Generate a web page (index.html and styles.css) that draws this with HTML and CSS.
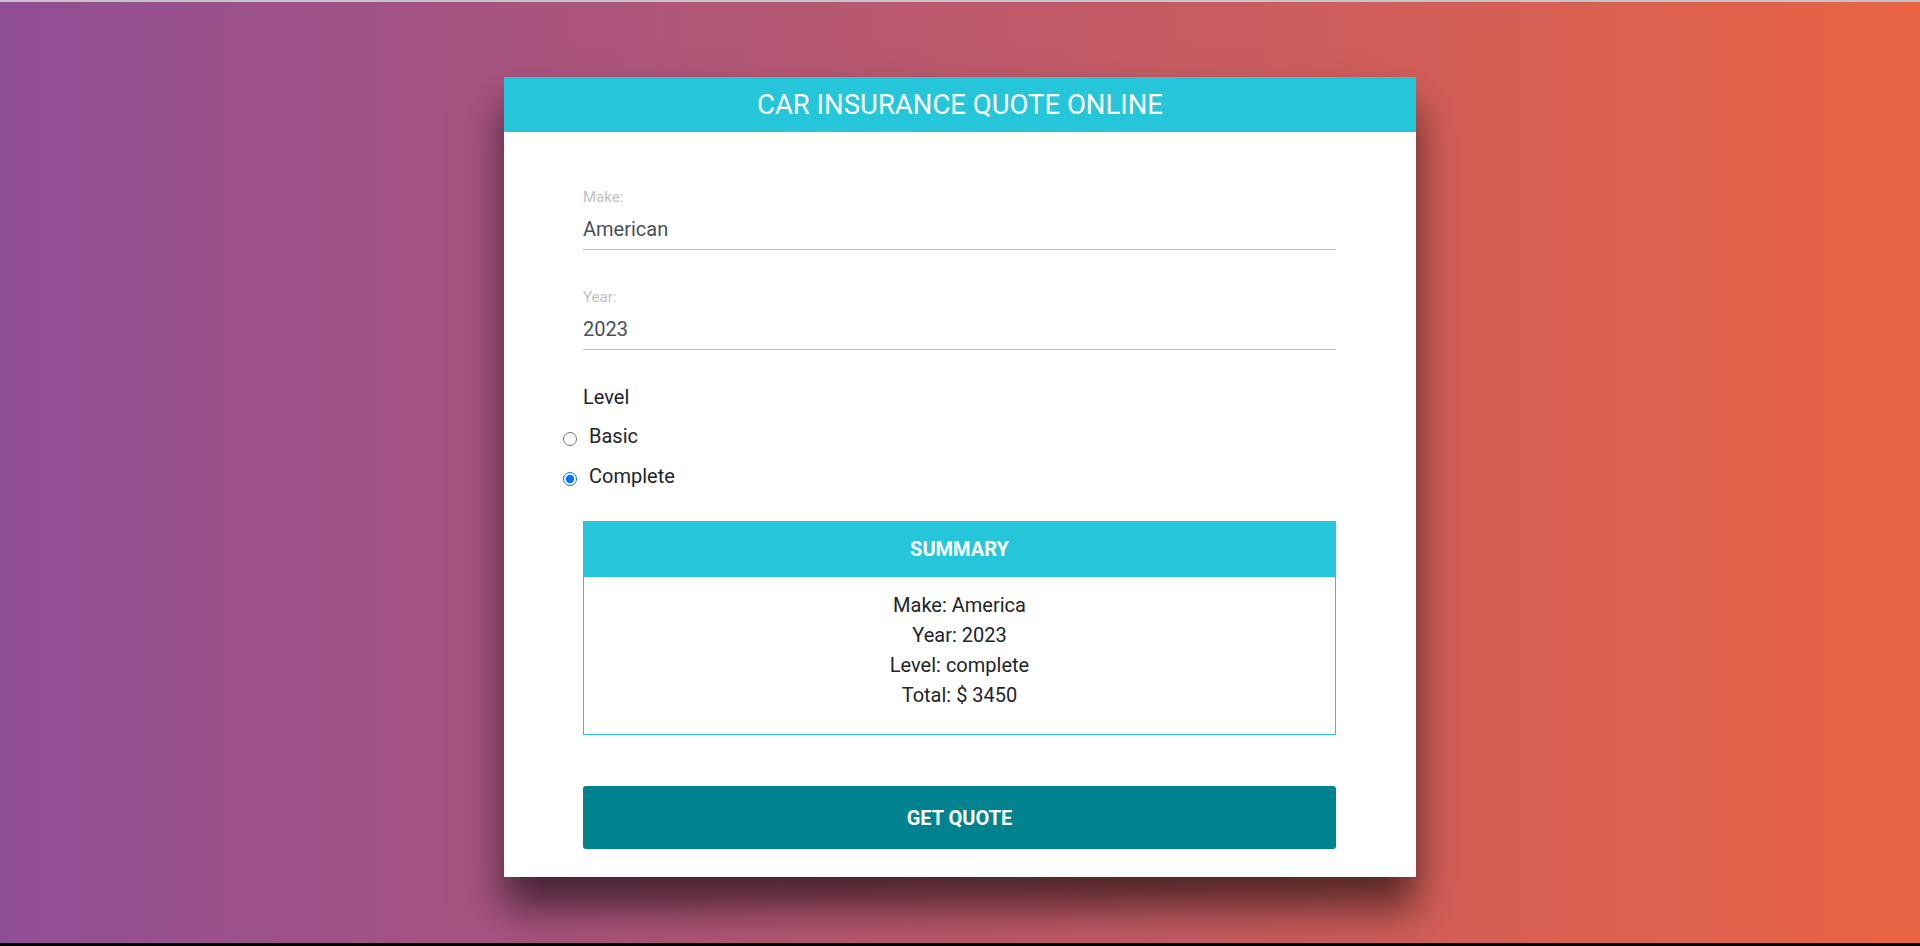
FILE: index.html
```html
<!DOCTYPE html>
<html lang="en">
<head>
<meta charset="utf-8">
<title>Car Insurance Quote</title>
<link rel="stylesheet" href="styles.css">
</head>
<body>
  <main class="card">
    <header class="card-header">
      <h1 class="card-title">CAR INSURANCE QUOTE ONLINE</h1>
    </header>
    <form class="quote-form">
      <div class="field field-first">
        <label class="field-label" for="make">Make:</label>
        <input class="field-input" id="make" type="text" value="American">
      </div>
      <div class="field field-second">
        <label class="field-label" for="year">Year:</label>
        <input class="field-input" id="year" type="text" value="2023">
      </div>
      <div class="level">
        <p class="level-title">Level</p>
        <label class="radio-row">
          <input class="radio" type="radio" name="level" value="basic">
          <span>Basic</span>
        </label>
        <label class="radio-row">
          <input class="radio" type="radio" name="level" value="complete" checked>
          <span>Complete</span>
        </label>
      </div>
      <section class="summary">
        <div class="summary-header">SUMMARY</div>
        <div class="summary-body">
          <p class="summary-line">Make: America</p>
          <p class="summary-line">Year: 2023</p>
          <p class="summary-line">Level: complete</p>
          <p class="summary-line">Total: $ 3450</p>
        </div>
      </section>
      <button class="quote-button" type="button">GET QUOTE</button>
    </form>
  </main>
</body>
</html>
```

FILE: styles.css
```css
* {
  box-sizing: border-box;
}

html, body {
  margin: 0;
  padding: 0;
}

body {
  height: 100vh;
  overflow: hidden;
  border-top: 2px solid #c6c4cb;
  border-bottom: 3px solid #000;
  background: linear-gradient(to right, #904e95, #e96443);
  font-family: Roboto, "Noto Sans", sans-serif;
  padding-top: 75px;
}

.card {
  width: 912px;
  margin: 0 auto;
  background: #fff;
  box-shadow: 0 30px 40px rgba(0, 0, 0, 0.6);
}

.card-header {
  height: 55px;
  background: #26c6da;
  display: flex;
  align-items: center;
  justify-content: center;
}

.card-title {
  margin: 0;
  color: #fff;
  font-size: 27.5px;
  font-weight: 400;
  line-height: 1;
}

.quote-form {
  padding: 0 80px 28px 79px;
  display: flex;
  flex-direction: column;
}

.field {
  display: flex;
  flex-direction: column;
}

.field-first {
  margin-top: 56px;
}

.field-second {
  margin-top: 38px;
}

.field-label {
  font-size: 15px;
  line-height: 18px;
  color: #c2c2bc;
}

.field-input {
  height: 44px;
  padding: 3px 0 0 0;
  border: none;
  border-bottom: 1px solid #bdbdbd;
  font-family: Roboto, "Noto Sans", sans-serif;
  font-size: 20px;
  color: #495057;
  background: transparent;
  outline: none;
}

.level {
  margin-top: 35px;
  display: flex;
  flex-direction: column;
  gap: 16px;
}

.level-title {
  margin: 0 0 -1px 0;
  font-size: 20px;
  line-height: 24px;
  color: #212529;
}

.radio-row {
  display: flex;
  align-items: center;
  height: 24px;
  margin-left: -20px;
  font-size: 20px;
  line-height: 24px;
  color: #212529;
}

.radio {
  width: 14px;
  height: 14px;
  margin: 6px 12px 0 0;
}

.summary {
  margin-top: 33px;
  border: 1px solid #26c6da;
}

.summary-header {
  height: 56px;
  margin: -1px -1px 0 -1px;
  background: #26c6da;
  color: #fff;
  font-size: 20px;
  font-weight: 700;
  display: flex;
  align-items: center;
  justify-content: center;
}

.summary-body {
  padding: 13px 0 24px;
  text-align: center;
}

.summary-line {
  margin: 0;
  font-size: 20px;
  line-height: 30px;
  color: #212529;
}

.quote-button {
  margin-top: 51px;
  height: 63px;
  border: none;
  border-radius: 3px;
  background: #00838f;
  color: #fff;
  font-family: Roboto, "Noto Sans", sans-serif;
  font-size: 20px;
  font-weight: 700;
  cursor: pointer;
}
```
